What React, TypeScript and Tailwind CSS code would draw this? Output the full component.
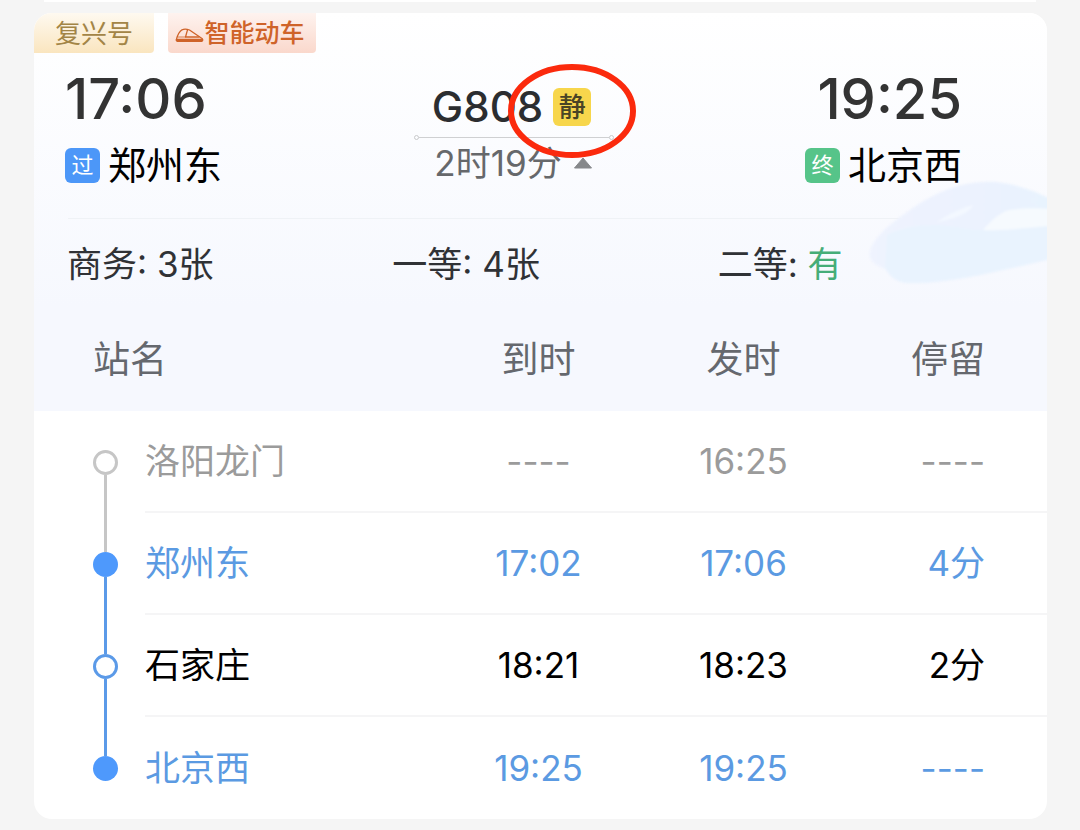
import { useState } from "react";
import clsx from "clsx";

const seats = [
  { label: "商务", value: "3张", available: false },
  { label: "一等", value: "4张", available: false },
  { label: "二等", value: "有", available: true },
];

const stops = [
  { name: "洛阳龙门", arrive: "----", depart: "16:25", stay: "----", text: "text-[#9b9b9b]", dot: "border-[3px] border-[#c6c6c6]", before: "bg-transparent", after: "bg-[#c6c6c6]" },
  { name: "郑州东", arrive: "17:02", depart: "17:06", stay: "4分", text: "text-[#5b9ae2]", dot: "bg-[#4e99fc]", before: "bg-[#c6c6c6]", after: "bg-[#5b9ae8]" },
  { name: "石家庄", arrive: "18:21", depart: "18:23", stay: "2分", text: "text-black", dot: "border-[3px] border-[#5b9ae8]", before: "bg-[#5b9ae8]", after: "bg-[#5b9ae8]" },
  { name: "北京西", arrive: "19:25", depart: "19:25", stay: "----", text: "text-[#5b9ae2]", dot: "bg-[#4e99fc]", before: "bg-[#5b9ae8]", after: "bg-transparent" },
];

const TrainIcon = () => (
  <svg viewBox="0 0 29 15" className="mt-1 h-[15px] w-[29px] shrink-0" fill="none" stroke="#cf6329" strokeWidth="1.3" strokeLinejoin="round" strokeLinecap="round">
    <path d="M1.500 11C2.500 7.500 4.500 3.500 7 1.800C9 0.800 12 1 14.500 2L27 10.500C28.200 11.800 27.800 13.300 26.500 13.300H2.500C1.300 13.300 1 12.200 1.500 11Z" />
    <path d="M1.500 11.500H27.500L26.500 13.300H2.500Z" fill="#cf6329" />
    <path d="M12.500 1.800L10.500 9H24" />
    <path d="M10.500 9H3" strokeWidth="0.8" />
  </svg>
);

const TrainWatermark = () => (
  <svg viewBox="0 0 180 110" className="absolute right-0 top-[166px] h-[110px] w-[180px]" aria-hidden="true">
    <defs>
      <linearGradient id="roof" x1="0" y1="0" x2="1" y2="0">
        <stop offset="0" stopColor="#eff3fe" />
        <stop offset="0.6" stopColor="#ecf2fe" />
        <stop offset="1" stopColor="#e8f3fe" />
      </linearGradient>
      <filter id="soft" colorInterpolationFilters="sRGB">
        <feGaussianBlur stdDeviation="1.2" />
      </filter>
    </defs>
    <g filter="url(#soft)">
      <path d="M3 72C8 56 24 44 50 26C82 6 106 2 130 3C154 6 172 14 184 20V80C140 90 90 103 50 104C28 105 24 98 18 90C6 86 1 80 3 72Z" fill="url(#roof)" />
      <path d="M20 56C46 44 72 44 100 50C128 54 158 50 184 48V80C140 90 90 103 50 104C28 105 24 98 18 88Z" fill="#e9f3fe" />
      <path d="M116 51C124 42 132 34 142 31C156 29 170 29 184 30V47C158 49 136 52 116 51Z" fill="#f6fafe" />
      <path d="M70 43C80 36 92 30 106 26C104 33 88 40 70 43Z" fill="#f3f8ff" />
    </g>
  </svg>
);

const StationBadge = ({ text, className }: { text: string; className: string }) => (
  <span className={clsx("flex size-[35px] items-center justify-center rounded-md text-[22px] leading-none text-white", className)}>
    {text}
  </span>
);

const App = () => {
  const [open, setOpen] = useState(true);

  return (
    <main className="min-h-screen bg-[#f5f5f5] pb-[11px] font-['Inter','Noto_Sans_CJK_SC',sans-serif]">
      {/* Bottom edge of the previous card */}
      <div className="mx-[44px] h-[2px] bg-white" />

      <article className="relative mt-[11px] mr-[33px] ml-[34px] overflow-hidden rounded-[18px] bg-white">
        <header className="bg-gradient-to-b from-white to-[#f6f8fe]">
          <TrainWatermark />

          {/* Tags */}
          <div className="flex h-10 gap-[14px] text-[26px] leading-[42px]">
            <span className="w-[120px] rounded-br-sm bg-gradient-to-b from-[#fef9f0] to-[#fae5bf] text-center text-[#a38546]">
              复兴号
            </span>
            <span className="flex w-[148px] items-center justify-center rounded-b-sm bg-gradient-to-b from-[#fef3ef] to-[#fad8cc] pr-1 text-[25px] font-medium text-[#cf6329]">
              <TrainIcon />
              智能动车
            </span>
          </div>

          {/* Route */}
          <div className="relative flex justify-between pt-[14px] pr-[85px] pb-[29px] pl-[31px]">
            <div className="flex flex-col gap-[10px]">
              <time className="text-[56px] leading-16 font-medium text-[#333]">17:06</time>
              <div className="flex h-12 items-center gap-2 text-[38px] leading-12 text-black">
                <StationBadge text="过" className="bg-[#4c97f8]" />
                郑州东
              </div>
            </div>

            <div className="flex w-[200px] flex-col pt-4">
              <div className="flex h-12 items-center justify-center gap-[10px] pr-1">
                <h1 className="text-[42px] leading-12 font-medium text-[#2b2d30]">G808</h1>
                <span className="relative flex size-[38px] items-center justify-center rounded-md bg-[#f7d64c] text-[27px] leading-none font-medium text-[#4a4426]">
                  静
                  <svg viewBox="0 0 128 96" className="absolute top-[-25px] left-[-45px] z-10 h-[96px] w-[128px] max-w-none" fill="none">
                    <ellipse cx="64" cy="48" rx="61" ry="44" stroke="#fb2a0d" strokeWidth="6" />
                  </svg>
                </span>
              </div>
              <div className="flex h-3 items-center">
                <span className="size-[5px] rounded-full border border-[#c9cacc]" />
                <span className="h-px flex-1 bg-[#cfd0d2]" />
                <span className="size-[5px] rounded-full border border-[#c9cacc]" />
              </div>
              <button
                type="button"
                aria-expanded={open}
                onClick={() => setOpen(!open)}
                className="flex h-10 items-center justify-center gap-[11px] text-[35px] leading-10 whitespace-nowrap text-[#66686b]"
              >
                2时19分
                <svg viewBox="0 0 20 12" className={clsx("h-3 w-5", !open && "rotate-180")}>
                  <path d="M10 1L18.500 11H1.500Z" fill="#86888b" stroke="#86888b" strokeLinejoin="round" />
                </svg>
              </button>
            </div>

            <div className="flex flex-col items-end gap-[10px]">
              <time className="text-[56px] leading-16 font-medium text-[#333]">19:25</time>
              <div className="flex h-12 items-center gap-2 text-[38px] leading-12 text-black">
                <StationBadge text="终" className="bg-[#56c489]" />
                北京西
              </div>
            </div>
          </div>

          {/* Seats */}
          <div className="ml-[34px] h-px bg-[#eff2f6]" />
          <ul className="relative grid h-[89px] grid-cols-3 items-center pr-1 pl-[33px] text-[35px] leading-12 text-[#303236]">
            {seats.map((seat) => (
              <li key={seat.label}>
                {seat.label}: <span className={clsx(seat.available && "text-[#45ad78]")}>{seat.value}</span>
              </li>
            ))}
          </ul>
        </header>

        {open && (
          <table className="w-full table-fixed border-separate border-spacing-0 text-center text-[35px] leading-12">
            <colgroup>
              <col className="w-[111px]" />
              <col />
              <col className="w-[205px]" />
              <col className="w-[205px]" />
              <col className="w-[201px]" />
            </colgroup>
            <thead className="bg-[#f6f8fe] text-[37px] text-[#65686e]">
              <tr className="h-[103px]">
                <th colSpan={2} className="pl-[59px] text-left font-normal">站名</th>
                <th className="font-normal">到时</th>
                <th className="font-normal">发时</th>
                <th className="pr-[62px] text-right font-normal">停留</th>
              </tr>
            </thead>
            <tbody>
              {stops.map((stop, index) => {
                const line = index < stops.length - 1 && "border-b-2 border-[#f5f5f6]";
                return (
                  <tr key={stop.name} className={clsx("h-[102px]", stop.text)}>
                    <td className="p-0 pl-8">
                      <div className="flex h-[102px] flex-col items-center">
                        <span className={clsx("w-[3px] flex-1", stop.before)} />
                        <span className={clsx("size-[25px] rounded-full", stop.dot)} />
                        <span className={clsx("w-[3px] flex-1", stop.after)} />
                      </div>
                    </td>
                    <td className={clsx("p-0 text-left", line)}>{stop.name}</td>
                    <td className={clsx("p-0", line)}>{stop.arrive}</td>
                    <td className={clsx("p-0", line)}>{stop.depart}</td>
                    <td className={clsx("p-0 pr-[62px] text-right", line)}>{stop.stay}</td>
                  </tr>
                );
              })}
            </tbody>
          </table>
        )}
      </article>
    </main>
  );
};

export default App;
